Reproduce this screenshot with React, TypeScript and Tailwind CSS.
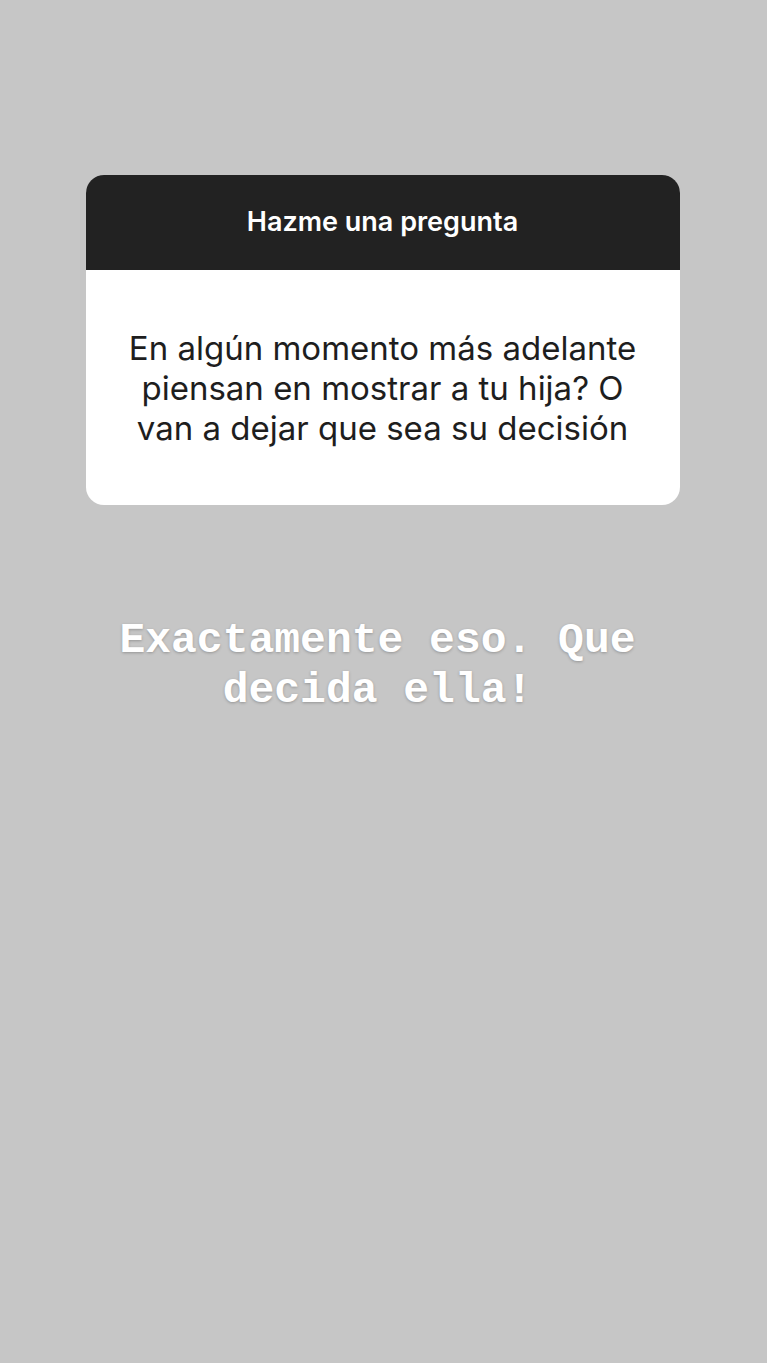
export default function App() {
  return (
    <div className="min-h-[1363px] w-full bg-[#c6c6c6] pt-[175px]">
      {/* Question sticker */}
      <div className="mx-auto w-[594px] -translate-x-px overflow-hidden rounded-[18px] bg-white">
        <div className="flex h-[95px] items-center justify-center bg-[#222222]">
          <span className="text-[27px] font-semibold text-white" style={{ fontFamily: '"Inter", "Liberation Sans", sans-serif' }}>
            Hazme una pregunta
          </span>
        </div>
        <div className="flex h-[235px] items-center justify-center px-4">
          <p
            className="text-center text-[33px] leading-[40px] text-[#1e1e1e]"
            style={{ fontFamily: '"Inter", "Liberation Sans", sans-serif' }}
          >
            En algún momento más adelante
            <br />
            piensan en mostrar a tu hija? O
            <br />
            van a dejar que sea su decisión
          </p>
        </div>
      </div>

      {/* Typewriter reply */}
      <p
        className="mt-[111px] pr-[12px] text-center text-[43px] font-bold leading-[50px] text-white [text-shadow:0_1px_3px_rgba(0,0,0,0.25)]"
        style={{ fontFamily: '"Liberation Mono", monospace' }}
      >
        Exactamente eso. Que
        <br />
        decida ella!
      </p>
    </div>
  )
}
